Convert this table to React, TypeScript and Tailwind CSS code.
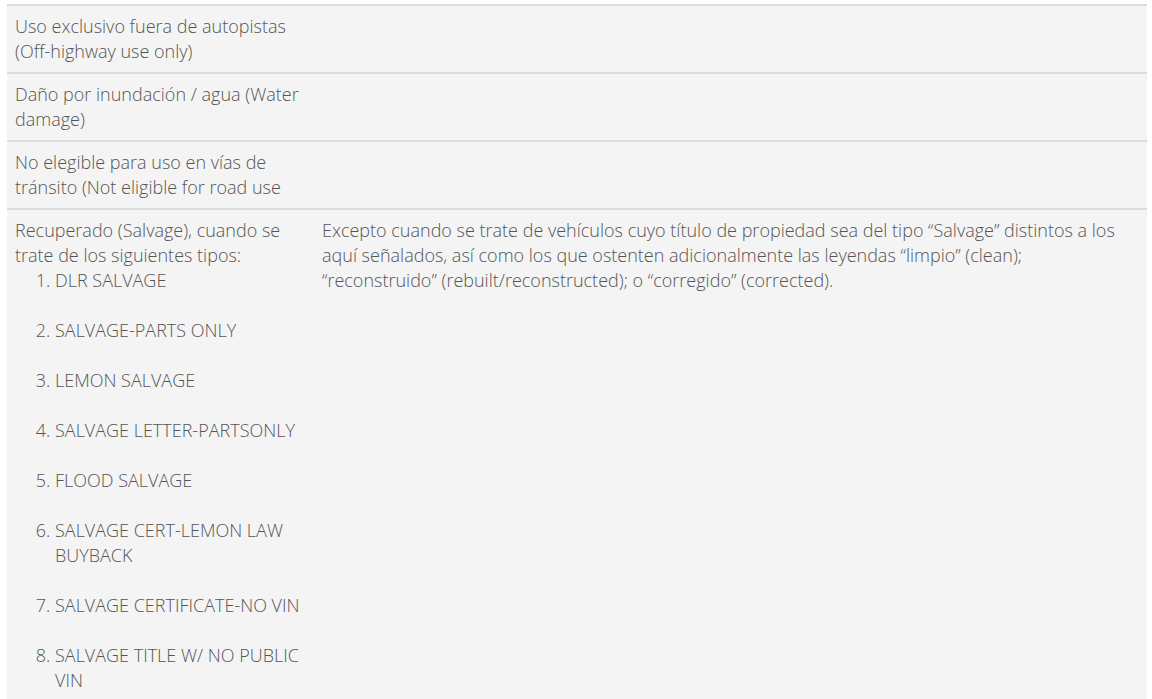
import React from "react";

const items = [
  "DLR SALVAGE",
  "SALVAGE-PARTS ONLY",
  "LEMON SALVAGE",
  "SALVAGE LETTER-PARTSONLY",
  "FLOOD SALVAGE",
  "SALVAGE CERT-LEMON LAW BUYBACK",
  "SALVAGE CERTIFICATE-NO VIN",
  "SALVAGE TITLE W/ NO PUBLIC VIN",
];

export default function App() {
  return (
    <div
      className="min-h-[699px] bg-white pl-[7px] pr-[5px] pt-[4px] text-[18px] font-light leading-[25px] text-[#555]"
      style={{ fontFamily: '"Open Sans", "Liberation Sans", sans-serif' }}
    >
      <table className="w-full border-collapse bg-[#f4f4f4]">
        <tbody>
          <tr className="border-t-2 border-[#dcdcdc]">
            <td className="w-[307px] px-2 py-2 align-top">
              Uso exclusivo fuera de autopistas (Off-highway use only)
            </td>
            <td className="px-2 py-2 align-top"></td>
          </tr>
          <tr className="border-t-2 border-[#dcdcdc]">
            <td className="w-[307px] px-2 py-2 align-top">
              Daño por inundación / agua (Water damage)
            </td>
            <td className="px-2 py-2 align-top"></td>
          </tr>
          <tr className="border-t-2 border-[#dcdcdc]">
            <td className="w-[307px] px-2 py-2 align-top">
              No elegible para uso en vías de tránsito (Not eligible for road use
            </td>
            <td className="px-2 py-2 align-top"></td>
          </tr>
          <tr className="border-t-2 border-[#dcdcdc]">
            <td className="w-[307px] px-2 py-2 align-top">
              Recuperado (Salvage), cuando se trate de los siguientes tipos:
              <ol className="list-decimal pl-10">
                {items.map((it) => (
                  <li key={it} className="mb-[25px]">
                    {it}
                  </li>
                ))}
              </ol>
            </td>
            <td className="px-2 py-2 align-top">
              Excepto cuando se trate de vehículos cuyo título de propiedad sea del tipo “Salvage” distintos a los aquí señalados, así como los que ostenten adicionalmente las leyendas “limpio” (clean); “reconstruido” (rebuilt/reconstructed); o “corregido” (corrected).
            </td>
          </tr>
        </tbody>
      </table>
    </div>
  );
}
